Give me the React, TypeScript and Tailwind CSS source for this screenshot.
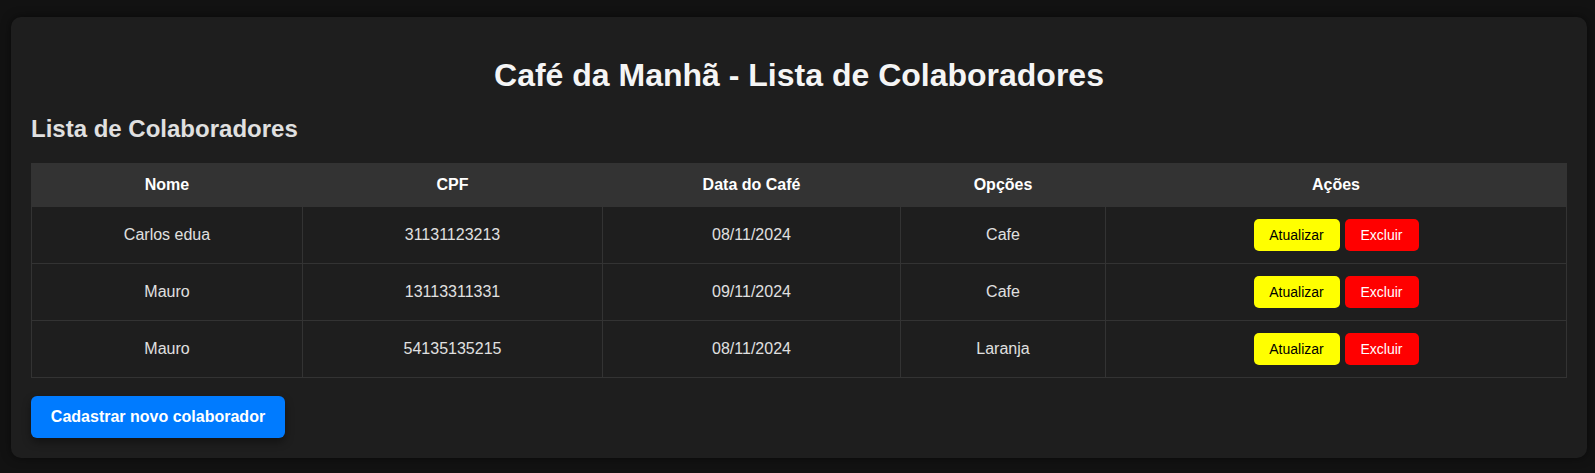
import React from "react";

interface Colaborador {
  nome: string;
  cpf: string;
  data: string;
  opcao: string;
}

const colaboradores: Colaborador[] = [
  { nome: "Carlos edua", cpf: "31131123213", data: "08/11/2024", opcao: "Cafe" },
  { nome: "Mauro", cpf: "13113311331", data: "09/11/2024", opcao: "Cafe" },
  { nome: "Mauro", cpf: "54135135215", data: "08/11/2024", opcao: "Laranja" },
];

const App: React.FC = () => {
  return (
    <div className="min-h-screen bg-[#121212] pl-[11px] pt-[17px] font-['Liberation_Sans',Arial,sans-serif]">
      <div className="w-[1576px] rounded-[10px] bg-[#1e1e1e] p-5 shadow-[0_0_10px_rgba(0,0,0,0.5)]">
        <h1 className="mt-5 mb-[21px] text-center text-[32px] leading-[37px] font-bold text-[#f5f5f5]">
          Café da Manhã - Lista de Colaboradores
        </h1>
        <h2 className="mb-5 text-[24px] leading-[28px] font-bold text-[#e0e0e0]">Lista de Colaboradores</h2>

        <table className="w-full table-fixed border-collapse text-[16px] leading-[18px]">
          <thead>
            <tr className="bg-[#333333] text-white">
              <th className="w-[271px] border border-[#333333] py-[12px] font-bold">Nome</th>
              <th className="w-[300px] border border-[#333333] py-[12px] font-bold">CPF</th>
              <th className="w-[298px] border border-[#333333] py-[12px] font-bold">Data do Café</th>
              <th className="w-[205px] border border-[#333333] py-[12px] font-bold">Opções</th>
              <th className="border border-[#333333] py-[12px] font-bold">Ações</th>
            </tr>
          </thead>
          <tbody>
            {colaboradores.map((c, i) => (
              <tr key={i} className="text-center text-[#e0e0e0]">
                <td className="h-[57px] border border-[#333333] px-3">{c.nome}</td>
                <td className="border border-[#333333] px-3">{c.cpf}</td>
                <td className="border border-[#333333] px-3">{c.data}</td>
                <td className="border border-[#333333] px-3">{c.opcao}</td>
                <td className="border border-[#333333] px-3">
                  <div className="flex justify-center gap-[5px]">
                    <button className="h-[32px] w-[86px] rounded-[5px] bg-[#ffff00] text-[14px] text-black">
                      Atualizar
                    </button>
                    <button className="h-[32px] w-[74px] rounded-[5px] bg-[#ff0000] text-[14px] text-white">
                      Excluir
                    </button>
                  </div>
                </td>
              </tr>
            ))}
          </tbody>
        </table>

        <button className="mt-[18px] h-[42px] w-[254px] rounded-[6px] bg-[#007bff] text-[16px] font-bold text-white shadow-[0_4px_8px_rgba(0,0,0,0.4)]">
          Cadastrar novo colaborador
        </button>
      </div>
    </div>
  );
};

export default App;
